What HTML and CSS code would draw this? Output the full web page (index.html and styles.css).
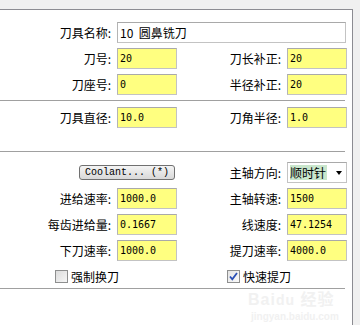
FILE: index.html
```html
<!DOCTYPE html>
<html lang="zh-CN">
<head>
    <meta charset="UTF-8">
    <title>刀具参数</title>
    <link rel="stylesheet" href="styles.css">
</head>
<body>
    <div class="panel">
        <div class="grid first">
            <label class="lbl">刀具名称:</label>
            <input class="field name" value="10  圆鼻铣刀" readonly>

            <label class="lbl">刀号:</label>
            <input class="field num" value="20" readonly>
            <label class="lbl">刀长补正:</label>
            <input class="field num" value="20" readonly>

            <label class="lbl">刀座号:</label>
            <input class="field num" value="0" readonly>
            <label class="lbl">半径补正:</label>
            <input class="field num" value="20" readonly>
        </div>

        <div class="sep sep-a"></div>

        <div class="grid second">
            <label class="lbl">刀具直径:</label>
            <input class="field num" value="10.0" readonly>
            <label class="lbl">刀角半径:</label>
            <input class="field num" value="1.0" readonly>
        </div>

        <div class="sep sep-b"></div>

        <div class="grid third">
            <div class="btn-cell"><button class="coolant">Coolant... (*)</button></div>
            <label class="lbl">主轴方向:</label>
            <div class="combo"><span class="combo-val">顺时针</span><span class="arrow"></span></div>

            <label class="lbl">进给速率:</label>
            <input class="field num" value="1000.0" readonly>
            <label class="lbl">主轴转速:</label>
            <input class="field num" value="1500" readonly>

            <label class="lbl">每齿进给量:</label>
            <input class="field num" value="0.1667" readonly>
            <label class="lbl">线速度:</label>
            <input class="field num" value="47.1254" readonly>

            <label class="lbl">下刀速率:</label>
            <input class="field num" value="1000.0" readonly>
            <label class="lbl">提刀速率:</label>
            <input class="field num" value="4000.0" readonly>
        </div>

        <div class="checks">
            <label class="check left"><span class="box"></span>强制换刀</label>
            <label class="check right"><span class="box on">
                <svg width="11" height="11" viewBox="0 0 11 11"><path d="M2 5.5 L4.3 8.3 L9 2" fill="none" stroke="#2a4fb5" stroke-width="1.8"/></svg>
            </span>快速提刀</label>
        </div>

        <div class="sep sep-c"></div>

        <div class="watermark">
            <div class="wm-logo">Bai<span class="wm-du">du</span> 经验</div>
            <div class="wm-url">jingyan.baidu.com</div>
        </div>
    </div>
</body>
</html>
```

FILE: styles.css
```css
body {
    margin: 0;
    background-color: #f0f0f0;
    font-family: 'Noto Sans CJK SC', 'Liberation Sans', sans-serif;
    font-size: 12px;
    color: #000;
}

.panel {
    position: relative;
    margin-top: 9px;
    width: 352px;
    height: 316px;
    background-color: #fff;
    border-top: 1px solid #8c8c92;
    border-right: 1px solid #8c8c92;
}

.grid {
    display: grid;
    grid-template-columns: 117px 60px 110px 60px;
    grid-auto-rows: 21px;
    row-gap: 5px;
}

.grid.first {
    padding-top: 12px;
}

.grid.second {
    padding-top: 6px;
}

.grid.third {
    padding-top: 10px;
}

.lbl {
    display: flex;
    align-items: center;
    justify-content: flex-end;
    padding-right: 6px;
    line-height: 1;
}

.field {
    box-sizing: border-box;
    width: 60px;
    height: 21px;
    margin: 0;
    padding: 0 2px;
    border: 1px solid #c3c3c3;
    border-top-color: #a9a9a9;
    border-left-color: #b4b4b4;
    outline: none;
    background-color: #ffff80;
    color: #000;
}

.field.num {
    font-family: 'DejaVu Sans Mono', 'Liberation Mono', monospace;
    font-size: 10px;
}

.field.name {
    grid-column: span 3;
    width: 229px;
    background-color: #fff;
    font-family: 'Noto Sans CJK SC', 'Liberation Sans', sans-serif;
    font-size: 12px;
}

.sep {
    width: 345px;
    height: 1px;
    background-color: #a0a0a0;
}

.sep-a {
    margin-top: 5px;
}

.sep-b {
    margin-top: 23px;
}

.sep-c {
    margin-top: 5px;
}

.btn-cell {
    grid-column: span 2;
    display: flex;
    align-items: center;
    justify-content: flex-end;
    padding-right: 2px;
}

.coolant {
    box-sizing: border-box;
    width: 96px;
    height: 15px;
    padding: 0;
    border: 1px solid #707070;
    border-radius: 3px;
    background: linear-gradient(#f4f4f4, #e6e6e6 50%, #d8d8d8);
    font-family: 'Liberation Mono', monospace;
    font-size: 10px;
    color: #000;
    line-height: 13px;
}

.combo {
    box-sizing: border-box;
    width: 60px;
    height: 21px;
    border: 1px solid #c3c3c3;
    border-top-color: #a9a9a9;
    display: flex;
    align-items: center;
    padding: 0 2px;
}

.combo-val {
    background-color: #c9e6cc;
    padding: 1px 0;
    line-height: 13px;
    width: 37px;
}

.arrow {
    margin-left: 9px;
    width: 0;
    height: 0;
    border-left: 3.5px solid transparent;
    border-right: 3.5px solid transparent;
    border-top: 4px solid #000;
}

.checks {
    display: flex;
    margin-top: 9px;
    height: 13px;
}

.check {
    display: flex;
    align-items: center;
    gap: 3px;
    font-size: 12px;
    line-height: 13px;
}

.check.left {
    margin-left: 55px;
}

.check.right {
    margin-left: 108px;
}

.box {
    box-sizing: border-box;
    width: 13px;
    height: 13px;
    border: 1px solid #8e8f8f;
    background: linear-gradient(135deg, #dcdcdc, #f6f6f6);
    display: flex;
    align-items: center;
    justify-content: center;
}

.box.on {
    background: linear-gradient(135deg, #e4e4e4, #fafafa);
}

.watermark {
    position: absolute;
    left: 248px;
    top: 281px;
    color: #f1f1f1;
    font-family: 'Liberation Sans', 'Noto Sans CJK SC', sans-serif;
    pointer-events: none;
}

.wm-logo {
    font-size: 16px;
    font-weight: bold;
    letter-spacing: 1px;
    line-height: 18px;
}

.wm-du {
    font-size: 14px;
}

.wm-url {
    margin-top: 2px;
    margin-left: 3px;
    font-size: 10px;
    font-weight: bold;
}
```
